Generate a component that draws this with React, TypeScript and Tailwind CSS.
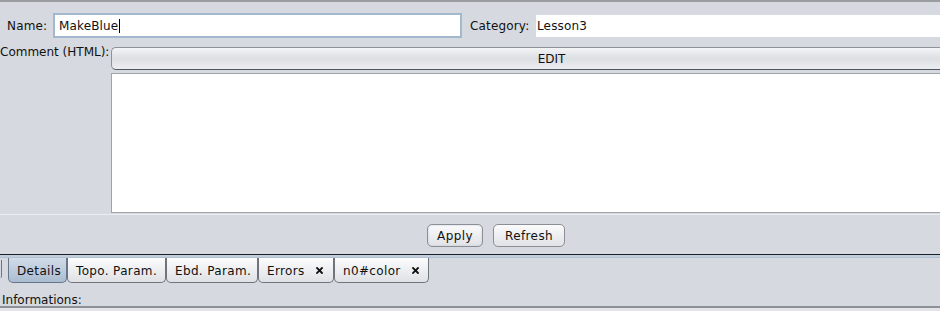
import React from "react";

function CloseX() {
  return (
    <svg width="7" height="7" viewBox="0 0 7 7" className="block">
      <path d="M1 1 L6 6 M6 1 L1 6" stroke="#111" strokeWidth="1.8" strokeLinecap="square" />
    </svg>
  );
}

type TabProps = { label: string; w: string; selected?: boolean; closable?: boolean };

function Tab({ label, w, selected, closable }: TabProps) {
  return (
    <div
      className={
        "h-[25px] flex items-center pl-[8px] pt-[2px] border border-t-0 rounded-b-[5px] shrink-0 " +
        w +
        (selected
          ? " bg-gradient-to-b from-[#d2dce8] to-[#aabcd1] border-[#66778a]"
          : " bg-gradient-to-b from-[#fcfcfd] to-[#dfe1e5] border-[#6f747c]")
      }
    >
      <span className="tracking-[0.35px]">{label}</span>
      {closable && (
        <span className="ml-[11px] -mt-[1px]">
          <CloseX />
        </span>
      )}
    </div>
  );
}

export default function App() {
  return (
    <div className="w-[940px] h-[311px] overflow-hidden bg-[#d6d9df] text-[12px] leading-[14px] text-[#111] font-['DejaVu_Sans',sans-serif]">
      <div className="h-[2px] bg-[#9a9c9f]" />

      {/* Row 1 */}
      <div className="flex items-center mt-[11px] h-[25px] tracking-[0.15px]">
        <div className="w-[46px] ml-[7px] shrink-0">Name:</div>
        <div className="w-[409px] h-[25px] shrink-0 border-2 border-[#a2b8ce] bg-white flex items-center pl-[4px]">
          <span>MakeBlue</span>
          <span className="inline-block w-px h-[14px] bg-black ml-px" />
        </div>
        <div className="w-[66px] ml-[8px] shrink-0">Category:</div>
        <div className="flex-1 h-[22px] bg-white flex items-center pl-px">Lesson3</div>
      </div>

      {/* Row 2 */}
      <div className="flex mt-[7px]">
        <div className="w-[111px] shrink-0">Comment (HTML):</div>
        <div className="flex-1 flex flex-col">
          <div className="mt-[2px] h-[23px] rounded-l-[5px] border border-r-0 border-[#8f9298] border-b-[#51555c] bg-gradient-to-b from-[#f3f4f6] via-[#dcdfe3] to-[#eceef1] flex items-center justify-center pl-[51px]">
            EDIT
          </div>
          <div className="mt-[3px] h-[140px] bg-white border border-r-0 border-[#a0a3a8]" />
        </div>
      </div>

      {/* separator */}
      <div className="mt-px h-px bg-[#eceef1]" />

      {/* Buttons */}
      <div className="flex mt-[9px] h-[23px] pl-[427px] gap-[10px] tracking-[0.4px]">
        <div className="w-[56px] h-[23px] rounded-[5px] border border-[#8b8e94] bg-gradient-to-b from-[#fbfbfc] to-[#e0e2e6] flex items-center justify-center shadow-[inset_0_0_2px_#b9c8da]">
          Apply
        </div>
        <div className="w-[72px] h-[23px] rounded-[5px] border border-[#8b8e94] bg-gradient-to-b from-[#fbfbfc] to-[#e0e2e6] flex items-center justify-center">
          Refresh
        </div>
      </div>

      {/* tab strip */}
      <div className="mt-[7px] h-px bg-[#1d1f23]" />
      <div className="h-[3px] bg-[#c3cedd] border-b border-[#b3c0d0]" />
      <div className="flex h-[25px]">
        <div className="w-[2px] h-[18px] border-r border-[#6f747c] rounded-br-[3px] mt-[2px] shrink-0" />
        <div className="w-[6px] shrink-0" />
        <Tab label="Details" w="w-[59px]" selected />
        <Tab label="Topo. Param." w="w-[99px]" />
        <Tab label="Ebd. Param." w="w-[92px]" />
        <Tab label="Errors" w="w-[76px]" closable />
        <Tab label="n0#color" w="w-[95px]" closable />
      </div>

      <div className="mt-[10px] h-[13px] pl-[2px]">Informations:</div>
      <div className="h-[2px] bg-[#8d9197]" />
      <div className="h-[10px] bg-[#e1e3e7]" />
    </div>
  );
}
